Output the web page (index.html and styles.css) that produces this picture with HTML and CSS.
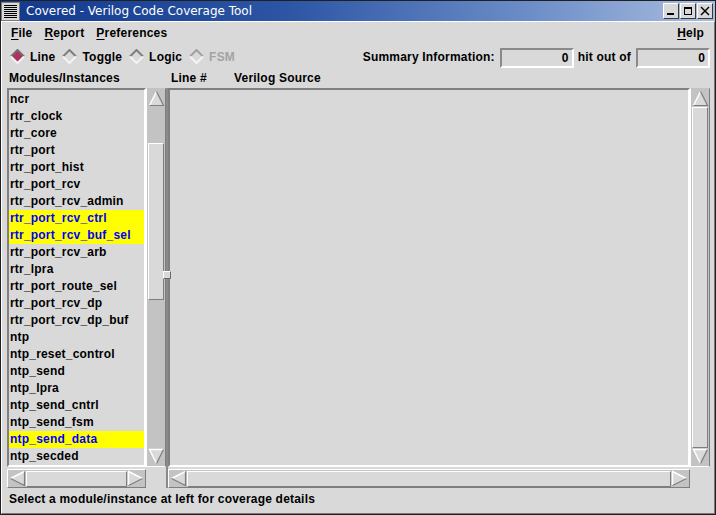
FILE: index.html
```html
<!DOCTYPE html>
<html>
<head>
<meta charset="utf-8">
<link rel="stylesheet" href="styles.css">
</head>
<body>
<div class="window">
  <div class="titlebar">
    <div class="wm-menu">
      <svg width="19" height="19" viewBox="0 0 19 19">
        <rect x="0.5" y="0.5" width="18" height="18" fill="#d9d9d9" stroke="#7a7a7a"/>
        <g stroke="#000" stroke-width="1">
          <line x1="3" y1="3.5" x2="16" y2="3.5"/>
          <line x1="3" y1="5.5" x2="16" y2="5.5"/>
          <line x1="3" y1="7.5" x2="16" y2="7.5"/>
          <line x1="3" y1="9.5" x2="16" y2="9.5"/>
          <line x1="3" y1="11.5" x2="16" y2="11.5"/>
          <line x1="3" y1="13.5" x2="16" y2="13.5"/>
          <line x1="3" y1="15.5" x2="16" y2="15.5"/>
        </g>
      </svg>
    </div>
    <div class="title">Covered - Verilog Code Coverage Tool</div>
    <div class="wm-btns">
      <div class="wm-btn"><svg width="14" height="14" viewBox="0 0 14 14"><rect x="3" y="9" width="7" height="2" fill="#000"/></svg></div>
      <div class="wm-btn"><svg width="14" height="14" viewBox="0 0 14 14"><rect x="3.5" y="3.5" width="7" height="7" fill="none" stroke="#000"/><rect x="3" y="3" width="8" height="2" fill="#000"/></svg></div>
      <div class="wm-btn"><svg width="14" height="14" viewBox="0 0 14 14"><g stroke="#000" stroke-width="1.5"><line x1="3" y1="3" x2="11" y2="11"/><line x1="11" y1="3" x2="3" y2="11"/></g></svg></div>
    </div>
  </div>
  <div class="client">
    <div class="menubar">
      <span class="menu"><u>F</u>ile</span>
      <span class="menu"><u>R</u>eport</span>
      <span class="menu"><u>P</u>references</span>
      <span class="menu help"><u>H</u>elp</span>
    </div>
    <div class="toolrow">
      <label class="radio">
        <svg width="15" height="15" viewBox="0 0 15 15">
          <polygon points="7.5,1 14,7.5 7.5,14 1,7.5" fill="#b03060"/>
          <polyline points="1,7.5 7.5,1 14,7.5" fill="none" stroke="#6e6e6e" stroke-width="2"/>
          <polyline points="1,7.5 7.5,14 14,7.5" fill="none" stroke="#f4f4f4" stroke-width="2"/>
        </svg>
        <span>Line</span>
      </label>
      <label class="radio">
        <svg width="15" height="15" viewBox="0 0 15 15">
          <polyline points="1,7.5 7.5,1 14,7.5" fill="none" stroke="#7e7e7e" stroke-width="2"/>
          <polyline points="1,7.5 7.5,14 14,7.5" fill="none" stroke="#f4f4f4" stroke-width="2"/>
        </svg>
        <span>Toggle</span>
      </label>
      <label class="radio">
        <svg width="15" height="15" viewBox="0 0 15 15">
          <polyline points="1,7.5 7.5,1 14,7.5" fill="none" stroke="#7e7e7e" stroke-width="2"/>
          <polyline points="1,7.5 7.5,14 14,7.5" fill="none" stroke="#f4f4f4" stroke-width="2"/>
        </svg>
        <span>Logic</span>
      </label>
      <label class="radio disabled">
        <svg width="15" height="15" viewBox="0 0 15 15">
          <polyline points="1,7.5 7.5,1 14,7.5" fill="none" stroke="#a0a0a0" stroke-width="2"/>
          <polyline points="1,7.5 7.5,14 14,7.5" fill="none" stroke="#f4f4f4" stroke-width="2"/>
        </svg>
        <span>FSM</span>
      </label>
      <div class="summary">
        <span>Summary Information:</span>
        <div class="entry">0</div>
        <span>hit out of</span>
        <div class="entry">0</div>
      </div>
    </div>
    <div class="headers">
      <span class="h-mod">Modules/Instances</span>
      <span class="h-line">Line #</span>
      <span>Verilog Source</span>
    </div>
    <div class="panes">
      <div class="pane left">
        <div class="listbox">
          <div class="item">ncr</div>
          <div class="item">rtr_clock</div>
          <div class="item">rtr_core</div>
          <div class="item">rtr_port</div>
          <div class="item">rtr_port_hist</div>
          <div class="item">rtr_port_rcv</div>
          <div class="item">rtr_port_rcv_admin</div>
          <div class="item hl">rtr_port_rcv_ctrl</div>
          <div class="item hl">rtr_port_rcv_buf_sel</div>
          <div class="item">rtr_port_rcv_arb</div>
          <div class="item">rtr_lpra</div>
          <div class="item">rtr_port_route_sel</div>
          <div class="item">rtr_port_rcv_dp</div>
          <div class="item">rtr_port_rcv_dp_buf</div>
          <div class="item">ntp</div>
          <div class="item">ntp_reset_control</div>
          <div class="item">ntp_send</div>
          <div class="item">ntp_lpra</div>
          <div class="item">ntp_send_cntrl</div>
          <div class="item">ntp_send_fsm</div>
          <div class="item hl">ntp_send_data</div>
          <div class="item">ntp_secded</div>
        </div>
        <div class="vscroll">
          <svg class="arrow" width="17" height="17" viewBox="0 0 17 17"><polygon points="8.5,1.5 15.5,15.5 1.5,15.5" fill="#d9d9d9"/><line x1="1.5" y1="15.5" x2="8.5" y2="1.5" stroke="#fff" stroke-width="1.4"/><polyline points="8.5,1.5 15.5,15.5 1.5,15.5" fill="none" stroke="#7e7e7e" stroke-width="1.2"/></svg>
          <div class="trough-gap"></div>
          <div class="slider v" style="height:157px"></div>
          <div class="trough-fill"></div>
          <svg class="arrow" width="17" height="17" viewBox="0 0 17 17"><polygon points="1.5,1.5 15.5,1.5 8.5,15.5" fill="#d9d9d9"/><polyline points="8.5,15.5 1.5,1.5 15.5,1.5" fill="none" stroke="#fff" stroke-width="1.4"/><line x1="15.5" y1="1.5" x2="8.5" y2="15.5" stroke="#7e7e7e" stroke-width="1.2"/></svg>
        </div>
        <div class="hscroll">
          <svg class="arrow" width="17" height="17" viewBox="0 0 17 17"><polygon points="1.5,8.5 15.5,1.5 15.5,15.5" fill="#d9d9d9"/><line x1="1.5" y1="8.5" x2="15.5" y2="1.5" stroke="#fff" stroke-width="1.4"/><polyline points="15.5,1.5 15.5,15.5 1.5,8.5" fill="none" stroke="#7e7e7e" stroke-width="1.2"/></svg>
          <div class="slider h"></div>
          <svg class="arrow" width="17" height="17" viewBox="0 0 17 17"><polygon points="1.5,1.5 15.5,8.5 1.5,15.5" fill="#d9d9d9"/><polyline points="1.5,15.5 1.5,1.5 15.5,8.5" fill="none" stroke="#fff" stroke-width="1.4"/><line x1="15.5" y1="8.5" x2="1.5" y2="15.5" stroke="#7e7e7e" stroke-width="1.2"/></svg>
        </div>
        <div class="corner"></div>
      </div>
      <div class="sash"><div class="sash-handle"></div></div>
      <div class="pane right">
        <div class="textarea"></div>
        <div class="vscroll">
          <svg class="arrow" width="17" height="17" viewBox="0 0 17 17"><polygon points="8.5,1.5 15.5,15.5 1.5,15.5" fill="#d9d9d9"/><line x1="1.5" y1="15.5" x2="8.5" y2="1.5" stroke="#fff" stroke-width="1.4"/><polyline points="8.5,1.5 15.5,15.5 1.5,15.5" fill="none" stroke="#7e7e7e" stroke-width="1.2"/></svg>
          <div class="slider v full"></div>
          <svg class="arrow" width="17" height="17" viewBox="0 0 17 17"><polygon points="1.5,1.5 15.5,1.5 8.5,15.5" fill="#d9d9d9"/><polyline points="8.5,15.5 1.5,1.5 15.5,1.5" fill="none" stroke="#fff" stroke-width="1.4"/><line x1="15.5" y1="1.5" x2="8.5" y2="15.5" stroke="#7e7e7e" stroke-width="1.2"/></svg>
        </div>
        <div class="hscroll">
          <svg class="arrow" width="17" height="17" viewBox="0 0 17 17"><polygon points="1.5,8.5 15.5,1.5 15.5,15.5" fill="#d9d9d9"/><line x1="1.5" y1="8.5" x2="15.5" y2="1.5" stroke="#fff" stroke-width="1.4"/><polyline points="15.5,1.5 15.5,15.5 1.5,8.5" fill="none" stroke="#7e7e7e" stroke-width="1.2"/></svg>
          <div class="slider h"></div>
          <svg class="arrow" width="17" height="17" viewBox="0 0 17 17"><polygon points="1.5,1.5 15.5,8.5 1.5,15.5" fill="#d9d9d9"/><polyline points="1.5,15.5 1.5,1.5 15.5,8.5" fill="none" stroke="#fff" stroke-width="1.4"/><line x1="15.5" y1="8.5" x2="1.5" y2="15.5" stroke="#7e7e7e" stroke-width="1.2"/></svg>
        </div>
        <div class="corner"></div>
      </div>
    </div>
    <div class="status">Select a module/instance at left for coverage details</div>
  </div>
</div>
</body>
</html>
```

FILE: styles.css
```css
* { box-sizing: border-box; }

body {
  margin: 0;
  background: #d9d9d9;
  font-family: "Liberation Sans", Arial, sans-serif;
  font-weight: bold;
  font-size: 12px;
  letter-spacing: 0.2px;
  color: #000;
}

.window {
  width: 716px;
  height: 515px;
  border: 1px solid #202020;
  display: flex;
  flex-direction: column;
  background: #d9d9d9;
  overflow: hidden;
}

.titlebar {
  height: 20px;
  flex-shrink: 0;
  display: flex;
  align-items: center;
  background: linear-gradient(to right, #12398c 0%, #2c55a5 40%, #6e8fc8 75%, #a9bde0 100%);
}

.wm-menu {
  width: 19px;
  height: 19px;
  display: flex;
}

.title {
  flex: 1;
  color: #fff;
  font-family: "DejaVu Sans", sans-serif;
  font-weight: normal;
  font-size: 12px;
  letter-spacing: 0;
  padding-left: 6px;
  white-space: nowrap;
}

.wm-btns {
  display: flex;
  gap: 1px;
  margin-right: 2px;
}

.wm-btn {
  width: 16px;
  height: 16px;
  background: #d9d9d9;
  border: 1px solid;
  border-color: #fff #3a3a3a #3a3a3a #fff;
  display: flex;
  align-items: center;
  justify-content: center;
}

.client {
  flex: 1;
  display: flex;
  flex-direction: column;
  border: 1px solid;
  border-color: #ffffff #7a7a7a #7a7a7a #ffffff;
  padding-bottom: 5px;
}

.menubar {
  height: 22px;
  flex-shrink: 0;
  display: flex;
  align-items: center;
  gap: 12px;
  padding-left: 9px;
  padding-right: 10px;
}

.menu u { text-decoration: underline; text-underline-offset: 2px; }

.help { margin-left: auto; }

.toolrow {
  height: 24px;
  flex-shrink: 0;
  display: flex;
  align-items: center;
  padding-top: 1px;
  padding-left: 8px;
  padding-right: 4px;
}

.radio {
  display: flex;
  align-items: center;
  gap: 5px;
  margin-right: 7px;
}

.radio svg { display: block; }

.radio.disabled { color: #a3a3a3; }

.summary {
  margin-left: auto;
  display: flex;
  align-items: center;
  gap: 4px;
}

.entry {
  width: 74px;
  height: 20px;
  border: 2px solid;
  border-color: #8a8a8a #ffffff #ffffff #8a8a8a;
  text-align: right;
  padding-right: 3px;
  line-height: 16px;
  margin-left: 1px;
  margin-top: 2px;
}

.headers {
  height: 20px;
  flex-shrink: 0;
  display: flex;
  align-items: flex-start;
  line-height: 20px;
  padding-left: 7px;
}

.h-mod { width: 162px; }
.h-line { width: 63px; }

.panes {
  height: 400px;
  flex-shrink: 0;
  display: flex;
  padding-left: 5px;
  padding-right: 4px;
}

.pane {
  display: grid;
  grid-template-rows: 379px 21px;
}

.pane.left { width: 159px; grid-template-columns: 139px 20px; }
.pane.right { width: 542px; grid-template-columns: 522px 20px; }

.listbox {
  border: 2px solid;
  border-color: #808080 #ffffff #ffffff #808080;
  overflow: hidden;
  padding-top: 1px;
}

.item {
  height: 17px;
  line-height: 17px;
  padding-left: 1px;
  white-space: nowrap;
}

.item.hl {
  background: #ffff00;
  color: #0000ff;
}

.textarea {
  border: 2px solid;
  border-color: #808080 #ffffff #ffffff #808080;
}

.vscroll {
  display: flex;
  flex-direction: column;
  align-items: center;
  background: #c3c3c3;
  border: 1px solid;
  border-color: #c3c3c3 #7e7e7e #ffffff #ffffff;
  padding: 1px 0;
}

.hscroll {
  display: flex;
  align-items: center;
  background: #c3c3c3;
  border: 1px solid;
  border-color: #ffffff #7e7e7e #7e7e7e #ffffff;
  margin-top: 2px;
  padding: 0 1px;
}

.arrow { display: block; flex-shrink: 0; }

.trough-gap { height: 36px; flex-shrink: 0; }
.trough-fill { flex: 1; }

.slider {
  background: #d9d9d9;
  border: 1px solid;
  border-color: #ffffff #7e7e7e #7e7e7e #ffffff;
}

.slider.v { width: 16px; flex-shrink: 0; }
.slider.v.full { flex: 1; }
.slider.h { flex: 1; height: 16px; }

.corner { background: #d9d9d9; }

.sash {
  width: 2px;
  position: relative;
  border-left: 1px solid #8a8a8a;
  border-right: 1px solid #8a8a8a;
}

.sash-handle {
  position: absolute;
  left: -4px;
  top: 183px;
  width: 8px;
  height: 8px;
  background: #d9d9d9;
  border: 1px solid;
  border-color: #ffffff #6a6a6a #6a6a6a #ffffff;
}

.status {
  height: 20px;
  flex-shrink: 0;
  display: flex;
  align-items: center;
  padding-left: 7px;
  padding-top: 2px;
}
```
